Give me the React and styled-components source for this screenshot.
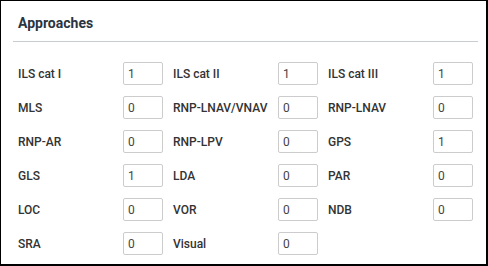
import React from 'react';
import styled, {createGlobalStyle} from 'styled-components';

const GlobalStyle = createGlobalStyle`
    body {
        margin: 0;
        font-family: Roboto, "Liberation Sans", sans-serif;
        background: #fff;
    }
`;

const Panel = styled.div`
    width: 488px;
    height: 266px;
    box-sizing: border-box;
    border-style: solid;
    border-color: #000;
    border-width: 1px 2px 2px 1px;
    padding: 0 8px 0 12px;
    background: #fff;
`;

const Header = styled.div`
    height: 41px;
    box-sizing: border-box;
    display: flex;
    align-items: center;
    padding: 4px 0 0 5px;
    border-bottom: 1px solid #c8cdd3;
`;

const Title = styled.h3`
    margin: 0;
    font-size: 14px;
    font-weight: 700;
    color: #2b3441;
`;

const Grid = styled.div`
    display: grid;
    grid-template-columns: repeat(3, 145px);
    column-gap: 10px;
    row-gap: 11px;
    padding: 20px 0 0 5px;
`;

const Cell = styled.label`
    display: flex;
    align-items: center;
    height: 23px;
`;

const Name = styled.span`
    width: 105px;
    font-size: 12px;
    font-weight: 500;
    color: #333;
`;

const Field = styled.input`
    width: 40px;
    height: 23px;
    box-sizing: border-box;
    border: 1px solid #ccc;
    border-radius: 2px;
    padding: 0 4px;
    font-family: Roboto, "Liberation Sans", sans-serif;
    font-size: 12px;
    color: #444;
    outline: none;
`;

const approaches = [
    ['ILS cat I', 1], ['ILS cat II', 1], ['ILS cat III', 1],
    ['MLS', 0], ['RNP-LNAV/VNAV', 0], ['RNP-LNAV', 0],
    ['RNP-AR', 0], ['RNP-LPV', 0], ['GPS', 1],
    ['GLS', 1], ['LDA', 0], ['PAR', 0],
    ['LOC', 0], ['VOR', 0], ['NDB', 0],
    ['SRA', 0], ['Visual', 0],
];

function App() {
    return (
        <>
            <GlobalStyle/>
            <Panel>
                <Header>
                    <Title>Approaches</Title>
                </Header>
                <Grid>
                    {approaches.map(([name, count]) => (
                        <Cell key={name}>
                            <Name>{name}</Name>
                            <Field type="text" defaultValue={count}/>
                        </Cell>
                    ))}
                </Grid>
            </Panel>
        </>
    );
}

export default App;
